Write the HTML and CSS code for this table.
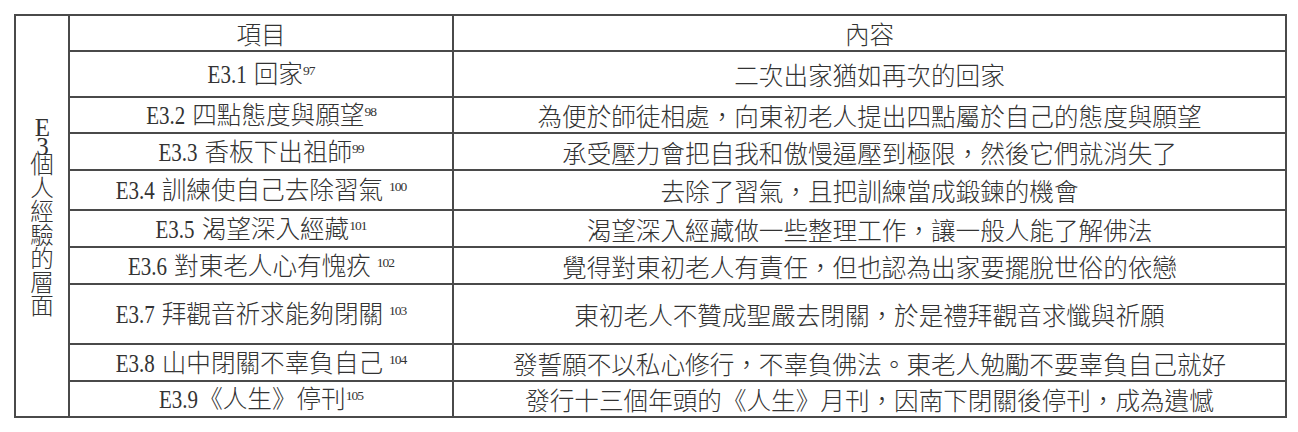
FILE: index.html
```html
<!DOCTYPE html>
<html lang="zh-Hant">
<head>
<meta charset="utf-8">
<link rel="stylesheet" href="styles.css">
</head>
<body>
<table class="tbl">
  <colgroup>
    <col class="c1"><col class="c2"><col class="c3">
  </colgroup>
  <tr class="r-head">
    <td rowspan="10" class="side">
      <div class="vert"><span class="v-lat">E3</span>個人經驗的層面</div>
    </td>
    <td>項目</td>
    <td>內容</td>
  </tr>
  <tr class="r1">
    <td><span class="lat">E3.1</span>回家<sup>97</sup></td>
    <td>二次出家猶如再次的回家</td>
  </tr>
  <tr class="r2">
    <td><span class="lat">E3.2</span>四點態度與願望<sup>98</sup></td>
    <td>為便於師徒相處，向東初老人提出四點屬於自己的態度與願望</td>
  </tr>
  <tr class="r3">
    <td><span class="lat">E3.3</span>香板下出祖師<sup>99</sup></td>
    <td>承受壓力會把自我和傲慢逼壓到極限，然後它們就消失了</td>
  </tr>
  <tr class="r4">
    <td><span class="lat">E3.4</span>訓練使自己去除習氣<sup class="gap">100</sup></td>
    <td>去除了習氣，且把訓練當成鍛鍊的機會</td>
  </tr>
  <tr class="r5">
    <td><span class="lat">E3.5</span>渴望深入經藏<sup>101</sup></td>
    <td>渴望深入經藏做一些整理工作，讓一般人能了解佛法</td>
  </tr>
  <tr class="r6">
    <td><span class="lat">E3.6</span>對東老人心有愧疚<sup class="gap">102</sup></td>
    <td>覺得對東初老人有責任，但也認為出家要擺脫世俗的依戀</td>
  </tr>
  <tr class="r7">
    <td><span class="lat">E3.7</span>拜觀音祈求能夠閉關<sup class="gap">103</sup></td>
    <td>東初老人不贊成聖嚴去閉關，於是禮拜觀音求懺與祈願</td>
  </tr>
  <tr class="r8">
    <td><span class="lat">E3.8</span>山中閉關不辜負自己<sup class="gap">104</sup></td>
    <td>發誓願不以私心修行，不辜負佛法。東老人勉勵不要辜負自己就好</td>
  </tr>
  <tr class="r9">
    <td><span class="lat nosp">E3.9</span>《人生》停刊<sup>105</sup></td>
    <td>發行十三個年頭的《人生》月刊，因南下閉關後停刊，成為遺憾</td>
  </tr>
</table>
</body>
</html>
```

FILE: styles.css
```css
html, body {
  margin: 0;
  padding: 0;
  background: #ffffff;
}

body {
  padding: 14px 0 0 14px;
  font-family: "Noto Sans CJK TC", "Liberation Serif", serif;
  font-weight: 300;
  color: #333333;
}

.tbl {
  border-collapse: collapse;
  table-layout: fixed;
  width: 1271px;
}

.c1 { width: 54px; }
.c2 { width: 384px; }
.c3 { width: 833px; }

.tbl td {
  border: 2px solid #4a4a4a;
  padding: 0;
  text-align: center;
  vertical-align: middle;
  font-size: 24.6px;
  line-height: 28px;
  white-space: nowrap;
}

.r-head { height: 36px; }
.r1 { height: 46px; }
.r2 { height: 36px; }
.r3 { height: 37px; }
.r4 { height: 40px; }
.r5 { height: 37px; }
.r6 { height: 37px; }
.r7 { height: 60px; }
.r8 { height: 37px; }
.r9 { height: 36px; }

.lat {
  font-family: "Liberation Serif", serif;
  font-weight: 400;
  font-size: 21px;
  display: inline-block;
  margin-right: 7px;
  transform: scaleY(1.22);
  transform-origin: 50% 78%;
}

.lat.nosp {
  margin-right: 0;
}

sup {
  font-family: "Liberation Serif", serif;
  font-weight: 400;
  font-size: 13.5px;
  letter-spacing: -1px;
  vertical-align: 8px;
  line-height: 0;
}

sup.gap {
  margin-left: 6px;
}

.tbl td.side {
  padding: 0;
  text-align: center;
  vertical-align: middle;
}

.vert {
  display: inline-block;
  writing-mode: vertical-rl;
  text-orientation: upright;
  font-size: 23.6px;
  line-height: 26px;
  margin-top: 2px;
}

.v-lat {
  font-family: "Liberation Serif", serif;
  font-weight: 400;
  font-size: 25px;
  letter-spacing: -8px;
}
```
